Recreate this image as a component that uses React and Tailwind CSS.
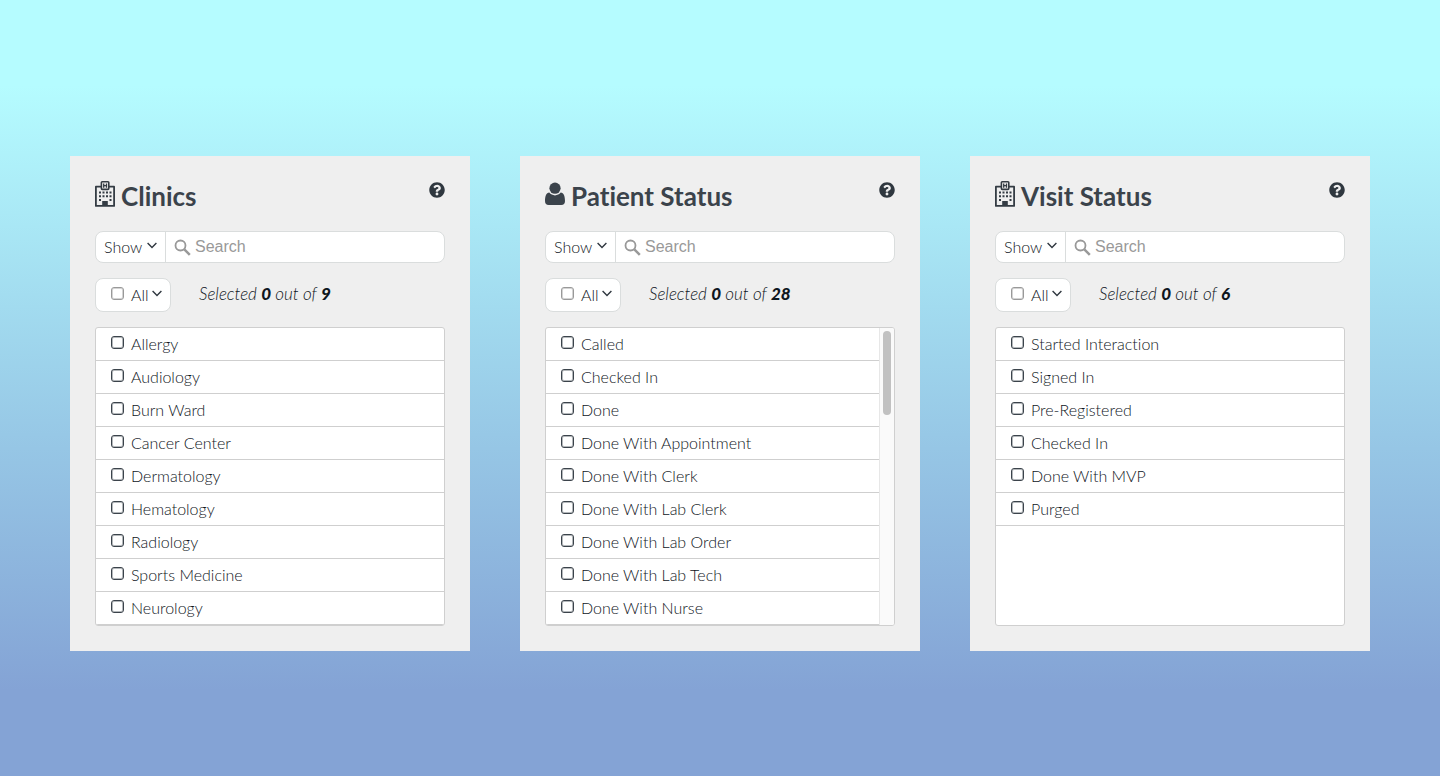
import { FaQuestionCircle } from 'react-icons/fa';

const clinics = [
  'Allergy',
  'Audiology',
  'Burn Ward',
  'Cancer Center',
  'Dermatology',
  'Hematology',
  'Radiology',
  'Sports Medicine',
  'Neurology',
];

// first page of the 28 statuses
const patientStatuses = [
  'Called',
  'Checked In',
  'Done',
  'Done With Appointment',
  'Done With Clerk',
  'Done With Lab Clerk',
  'Done With Lab Order',
  'Done With Lab Tech',
  'Done With Nurse',
];

const visitStatuses = [
  'Started Interaction',
  'Signed In',
  'Pre-Registered',
  'Checked In',
  'Done With MVP',
  'Purged',
];

function HospitalIcon() {
  return (
    <svg width="20" height="26" viewBox="0 0 20 26" fill="none" aria-hidden="true">
      <path d="M6 5.700H.9v19.200h18.200V5.700H14" stroke="#343c44" strokeWidth="1.800" strokeLinejoin="round" />
      <rect x="6.400" y=".8" width="7.400" height="7.600" rx=".8" stroke="#343c44" strokeWidth="1.600" />
      <path d="M8.700 2.500v4.200M11.500 2.500v4.200M8.700 4.600h2.800" stroke="#343c44" strokeWidth="1.300" />
      <path
        d="M4 11.500h12.500M4 15.200h12.500M4 19h2M14.500 19h2"
        stroke="#343c44"
        strokeWidth="2"
        strokeDasharray="2 1.500"
      />
      <path d="M7.200 25v-5h5.600v5z" fill="#343c44" />
    </svg>
  );
}

function PersonIcon() {
  return (
    <svg width="20" height="26" viewBox="0 0 20 26" fill="#3b434b" aria-hidden="true">
      <circle cx="10" cy="7.200" r="5.600" />
      <path d="M4.300 11.600C5.700 13.300 7.700 14.400 10 14.400s4.300-1.100 5.700-2.800c3.100.5 4.300 3.600 4.300 8.500 0 2.600-1.300 3.900-3.700 3.900H3.700C1.300 24 0 22.700 0 20.100c0-4.900 1.200-8 4.300-8.500z" />
    </svg>
  );
}

function SearchIcon() {
  return (
    <svg width="17" height="17" viewBox="0 0 17 17" fill="none" stroke="#999" className="shrink-0" aria-hidden="true">
      <circle cx="6.500" cy="6.500" r="5" strokeWidth="1.800" />
      <path d="M10.300 10.300l5.500 5.500" strokeWidth="2.500" />
    </svg>
  );
}

function Chevron() {
  return (
    <svg width="10" height="7" viewBox="0 0 10 7" fill="none" aria-hidden="true">
      <path d="M.6 1L5 5.400 9.400 1" stroke="#2f373f" strokeWidth="1.400" />
    </svg>
  );
}

function ListItem({ label }) {
  return (
    <li className="border-b border-[#cfcfcf]">
      <label className="flex h-8 items-center gap-[7px] pl-[15px]">
        <input
          type="checkbox"
          className="mb-1 size-[13px] appearance-none rounded-[3px] border border-[#3b434b] bg-white shadow-[inset_0_0_0_1px_#b4b8bb] checked:bg-[#3b434b]"
        />
        {label}
      </label>
    </li>
  );
}

function FilterPanel({ title, icon, items, total = items.length }) {
  return (
    <section className="bg-[#efefef] p-[25px]">
      <header className="flex h-[50px] items-start justify-between">
        <h2 className="flex items-start gap-1.5 text-[26px] leading-[30px] font-bold text-[#3b434b]">
          {icon}
          {title}
        </h2>
        <button type="button" aria-label={'Help for ' + title} className="mt-px text-[#2f373f]">
          <FaQuestionCircle size={16} />
        </button>
      </header>

      <div className="flex h-8 overflow-hidden rounded-lg border border-[#dadddd] bg-white">
        <button type="button" className="flex w-[70px] items-center justify-between border-r border-[#dadddd] px-2">
          Show
          <span className="mb-1">
            <Chevron />
          </span>
        </button>
        <label className="flex flex-1 items-center gap-1 pl-2">
          <SearchIcon />
          <input
            type="search"
            placeholder="Search"
            aria-label={'Search ' + title}
            className="w-full min-w-0 font-['Liberation_Sans',sans-serif] font-normal outline-none placeholder:text-[#999]"
          />
        </label>
      </div>

      <div className="mt-[15px] flex h-[34px] items-start gap-7">
        <div className="flex h-full w-[76px] items-center justify-between rounded-lg border border-[#dadddd] bg-white pr-2 pl-[15px]">
          <label className="flex items-center gap-[7px]">
            <input
              type="checkbox"
              className="mb-1 size-[13px] appearance-none rounded-[3px] border border-[#999] bg-white shadow-[inset_0_0_0_1px_#d4d4d4] checked:bg-[#999]"
            />
            All
          </label>
          <button type="button" aria-label="Selection options" className="mb-1">
            <Chevron />
          </button>
        </div>
        <p className="text-[17px] leading-8 italic">
          Selected <b className="font-black">0</b> out of <b className="font-black">{total}</b>
        </p>
      </div>

      <div className="mt-[15px] flex h-[299px] overflow-hidden rounded-[3px] border border-[#cfcfcf] bg-white">
        <ul className="flex-1">
          {items.map((item) => (
            <ListItem key={item} label={item} />
          ))}
        </ul>
        {total > items.length && (
          <div className="w-[15px] border-l border-[#e7e7e7] bg-[#fafafa] p-[3px]">
            <div className="h-[84px] rounded-full bg-[#c1c1c1]" />
          </div>
        )}
      </div>
    </section>
  );
}

export default function App() {
  return (
    <main className="min-h-screen bg-linear-to-b/srgb from-[#b5fcff] from-11% via-[#97c8e6] via-56% to-[#84a3d5] to-89% px-[70px] pt-[156px] pb-[125px] font-[Lato,sans-serif] text-base font-light text-[#0f161d] [font-variant-ligatures:none]">
      <div className="grid grid-cols-3 gap-[50px]">
        <FilterPanel title="Clinics" icon={<HospitalIcon />} items={clinics} />
        <FilterPanel title="Patient Status" icon={<PersonIcon />} items={patientStatuses} total={28} />
        <FilterPanel title="Visit Status" icon={<HospitalIcon />} items={visitStatuses} />
      </div>
    </main>
  );
}
